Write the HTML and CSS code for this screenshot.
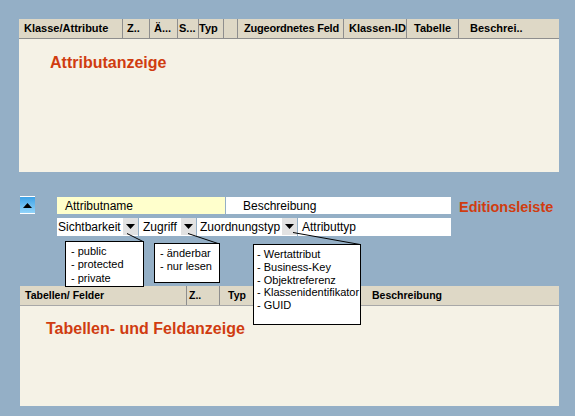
FILE: index.html
```html
<!DOCTYPE html>
<html>
    <head>
        <link rel="stylesheet" href="styles.css">
    </head>
    <body>
        <div class="page">
            <div class="grid top-grid">
                <div class="grid-head">
                    <span class="col t1">Klasse/Attribute</span>
                    <span class="col t2">Z..</span>
                    <span class="col t3">Ä...</span>
                    <span class="col t4">S...</span>
                    <span class="col t5">Typ</span>
                    <span class="col t6"></span>
                    <span class="col t7">Zugeordnetes Feld</span>
                    <span class="col t8">Klassen-ID</span>
                    <span class="col t9">Tabelle</span>
                    <span class="col t10">Beschrei..</span>
                </div>
                <div class="grid-body">
                    <span class="grid-label label-attr">Attributanzeige</span>
                </div>
            </div>

            <div class="editor">
                <div class="toggle">
                    <svg width="9" height="5" viewBox="0 0 9 5"><path d="M0 5 L4.5 0 L9 5 Z" fill="#000"/></svg>
                </div>
                <div class="fields">
                    <div class="field-row">
                        <div class="field field-name">Attributname</div>
                        <div class="field field-desc">Beschreibung</div>
                        <div class="editor-label">Editionsleiste</div>
                    </div>
                    <div class="field-row">
                        <div class="field combo w-vis">Sichtbarkeit<span class="drop"><svg width="9" height="5" viewBox="0 0 9 5"><path d="M0 0 L9 0 L4.5 5 Z" fill="#000"/></svg></span></div>
                        <div class="field combo w-acc">Zugriff<span class="drop"><svg width="9" height="5" viewBox="0 0 9 5"><path d="M0 0 L9 0 L4.5 5 Z" fill="#000"/></svg></span></div>
                        <div class="field combo w-map">Zuordnungstyp<span class="drop"><svg width="9" height="5" viewBox="0 0 9 5"><path d="M0 0 L9 0 L4.5 5 Z" fill="#000"/></svg></span></div>
                        <div class="field w-type">Attributtyp</div>
                    </div>
                </div>
            </div>

            <div class="grid bottom-grid">
                <div class="grid-head small">
                    <span class="col b1">Tabellen/ Felder</span>
                    <span class="col b2">Z..</span>
                    <span class="col b3">Typ</span>
                    <span class="col b4">Beschreibung</span>
                </div>
                <div class="grid-body">
                    <span class="grid-label label-tab">Tabellen- und Feldanzeige</span>
                </div>
            </div>

            <svg class="connectors" width="575" height="416">
                <line x1="127" y1="233.5" x2="143" y2="241.5" stroke="#000" stroke-width="1"/>
                <line x1="188" y1="233.5" x2="218" y2="243.5" stroke="#000" stroke-width="1"/>
                <line x1="293" y1="232.5" x2="360" y2="244.5" stroke="#000" stroke-width="1"/>
            </svg>

            <div class="callout callout-vis">
                <div>- public</div>
                <div>- protected</div>
                <div>- private</div>
            </div>
            <div class="callout callout-acc">
                <div>- änderbar</div>
                <div>- nur lesen</div>
            </div>
            <div class="callout callout-type">
                <div>- Wertattribut</div>
                <div>- Business-Key</div>
                <div>- Objektreferenz</div>
                <div>- Klassenidentifikator</div>
                <div>- GUID</div>
            </div>
        </div>
    </body>
</html>
```

FILE: styles.css
```css
body {
    margin: 0;
    background-color: #94afc6;
    font-family: "Liberation Sans", Arial, sans-serif;
    color: #000;
}

.page {
    position: relative;
    width: 575px;
    height: 416px;
    padding-top: 19px;
    box-sizing: border-box;
}

.grid {
    display: flex;
    flex-direction: column;
    background-color: #f5f2e6;
}

.top-grid {
    margin-left: 19px;
    width: 540px;
    height: 153px;
}

.bottom-grid {
    margin-left: 20px;
    width: 539px;
    height: 120px;
}

.grid-head {
    display: flex;
    height: 19px;
    background-color: #ded8c6;
    border-bottom: 1px solid #8e8e8e;
    font-size: 11px;
    font-weight: bold;
    line-height: 19px;
}

.grid-head.small {
    font-size: 10.5px;
    border-bottom-color: #a8a8a8;
}

.col {
    box-sizing: border-box;
    border-right: 1px solid #8e8e8e;
    white-space: nowrap;
    overflow: hidden;
}

.t1 { width: 104px; padding-left: 5px; }
.t2 { width: 27px; padding-left: 4px; }
.t3 { width: 28px; padding-left: 4px; }
.t4 { width: 21px; padding-left: 1px; }
.t5 { width: 25px; padding-left: 0; }
.t6 { width: 14px; }
.t7 { width: 106px; padding-left: 6px; letter-spacing: -0.2px; }
.t8 { width: 63px; padding-left: 5px; }
.t9 { width: 52px; padding-left: 7px; }
.t10 { flex: 1; padding-left: 11px; border-right: none; }

.b1 { width: 167px; padding-left: 5px; }
.b2 { width: 33px; padding-left: 2px; }
.b3 { width: 141px; padding-left: 8px; border-right: none; }
.b4 { flex: 1; padding-left: 11px; border-right: none; }

.grid-body {
    flex: 1;
}

.grid-label {
    display: block;
    color: #d03c10;
    font-size: 16px;
    font-weight: bold;
}

.label-attr {
    padding: 15px 0 0 31px;
}

.label-tab {
    padding: 14px 0 0 26px;
}

.editor {
    display: flex;
    margin-top: 24px;
    height: 90px;
}

.toggle {
    display: flex;
    align-items: center;
    justify-content: center;
    margin-left: 20px;
    width: 15px;
    height: 16px;
    border-top: 1px solid #fff;
    border-bottom: 1px solid #fff;
    background: linear-gradient(#3ea2e6, #92d4fa);
}

.fields {
    display: flex;
    flex-direction: column;
    gap: 2px;
    margin-left: 22px;
    margin-top: 1px;
}

.field-row {
    display: flex;
    gap: 1px;
}

.field {
    display: flex;
    align-items: center;
    box-sizing: border-box;
    height: 17px;
    background-color: #fff;
    font-size: 12px;
    white-space: nowrap;
}

.field-name {
    width: 168px;
    padding-left: 8px;
    background-color: #ffffcc;
}

.field-desc {
    width: 225px;
    padding-left: 17px;
}

.editor-label {
    margin-left: 7px;
    color: #d03c10;
    font-size: 14.5px;
    font-weight: bold;
    line-height: 17px;
    padding-top: 2px;
}

.combo {
    justify-content: space-between;
    height: 18px;
    padding-left: 1px;
}

.w-vis { width: 81px; }
.w-acc { width: 57px; padding-left: 4px; }
.w-map { width: 100px; padding-left: 3px; }

.w-type {
    width: 153px;
    height: 18px;
    padding-left: 4px;
}

.drop {
    display: flex;
    align-items: center;
    justify-content: center;
    width: 15px;
    height: 17px;
    margin-top: -1px;
    background-color: #e2e2e2;
}

.connectors {
    position: absolute;
    left: 0;
    top: 0;
}

.callout {
    position: absolute;
    box-sizing: border-box;
    border: 1px solid #000;
    background-color: #fff;
    font-size: 11px;
    line-height: 13.3px;
    padding: 3px 0 0 5px;
    white-space: nowrap;
}

.callout-vis {
    left: 65px;
    top: 241px;
    width: 79px;
    height: 46px;
}

.callout-acc {
    left: 154px;
    top: 243px;
    width: 66px;
    height: 40px;
}

.callout-type {
    left: 253px;
    top: 244px;
    width: 108px;
    height: 81px;
    padding-left: 3px;
    line-height: 12.8px;
}
```
